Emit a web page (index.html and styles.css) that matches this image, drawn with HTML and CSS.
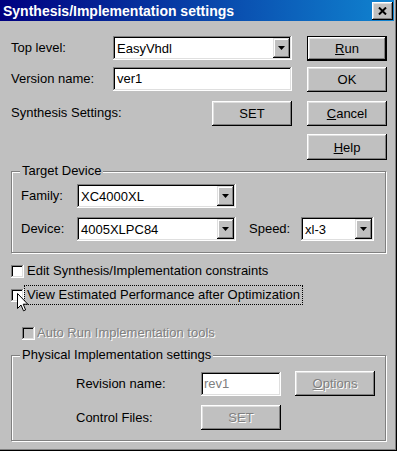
FILE: index.html
```html
<!DOCTYPE html>
<html>
<head>
<meta charset="utf-8">
<link rel="stylesheet" href="styles.css">
</head>
<body>
<div class="window">
  <div class="titlebar">
    <span class="title">Synthesis/Implementation settings</span>
    <div class="close">
      <svg width="9" height="8" viewBox="0 0 9 8"><path d="M1 0.5 L8 7.5 M8 0.5 L1 7.5" stroke="#000" stroke-width="2" fill="none"/></svg>
    </div>
  </div>
  <div class="content">
    <div class="top-grid">
      <span class="lbl">Top level:</span>
      <div class="combo w179"><span class="val">EasyVhdl</span><span class="drop"><svg width="7" height="4" viewBox="0 0 7 4"><path d="M0 0 H7 L3.5 4 Z" fill="#000"/></svg></span></div>
      <div class="btn default"><span><u>R</u>un</span></div>

      <span class="lbl">Version name:</span>
      <div class="edit w179">ver1</div>
      <div class="btn">OK</div>

      <span class="lbl">Synthesis Settings:</span>
      <div class="btn set">SET</div>
      <div class="btn"><span><u>C</u>ancel</span></div>

      <div class="btn help"><span><u>H</u>elp</span></div>
    </div>

    <div class="group target">
      <div class="group-title">Target Device</div>
      <div class="row first">
        <span class="lbl fam">Family:</span>
        <div class="combo w159"><span class="val">XC4000XL</span><span class="drop"><svg width="7" height="4" viewBox="0 0 7 4"><path d="M0 0 H7 L3.5 4 Z" fill="#000"/></svg></span></div>
      </div>
      <div class="row second">
        <span class="lbl fam">Device:</span>
        <div class="combo w159"><span class="val">4005XLPC84</span><span class="drop"><svg width="7" height="4" viewBox="0 0 7 4"><path d="M0 0 H7 L3.5 4 Z" fill="#000"/></svg></span></div>
        <span class="lbl speed">Speed:</span>
        <div class="combo w73"><span class="val">xl-3</span><span class="drop"><svg width="7" height="4" viewBox="0 0 7 4"><path d="M0 0 H7 L3.5 4 Z" fill="#000"/></svg></span></div>
      </div>
    </div>

    <div class="check-row c1">
      <span class="box"></span><span class="clabel">Edit Synthesis/Implementation constraints</span>
    </div>
    <div class="check-row c2">
      <span class="box"></span><span class="clabel focus">View Estimated Performance after Optimization</span>
    </div>
    <div class="check-row c3 disabled">
      <span class="box"></span><span class="clabel">Auto Run Implementation tools</span>
    </div>

    <div class="group physical">
      <div class="group-title">Physical Implementation settings</div>
      <div class="row prow1">
        <span class="lbl plbl">Revision name:</span>
        <div class="edit w80 dis">rev1</div>
        <div class="btn disabled opt"><span><u>O</u>ptions</span></div>
      </div>
      <div class="row prow2">
        <span class="lbl plbl">Control Files:</span>
        <div class="btn disabled">SET</div>
      </div>
    </div>
  </div>
  <svg class="cursor" width="12" height="19" viewBox="0 0 12 19"><path d="M0.5 0.5 L0.5 15.5 L4 12 L6.5 17.8 L8.6 16.9 L6.2 11.2 L10.8 11.2 Z" fill="#fff" stroke="#000" stroke-width="1"/></svg>
</div>
</body>
</html>
```

FILE: styles.css
```css
body {
  margin: 0;
  background: #c0c0c0;
  font-family: "Liberation Sans", Arial, sans-serif;
  font-size: 13px;
  color: #000;
}

.window {
  position: relative;
  width: 397px;
  height: 451px;
  box-sizing: border-box;
  background: #c0c0c0;
  border-right: 1px solid #000;
  border-bottom: 1px solid #000;
  box-shadow: inset -1px -1px #808080;
  overflow: hidden;
}

.titlebar {
  height: 21px;
  margin-right: 2px;
  padding: 0 1px 0 3px;
  display: flex;
  align-items: center;
  justify-content: space-between;
  background: linear-gradient(to right, #000080, #1084d0);
  color: #fff;
  font-weight: bold;
  font-size: 14px;
}

.close {
  width: 21px;
  height: 18px;
  box-sizing: border-box;
  background: #c0c0c0;
  display: flex;
  align-items: center;
  justify-content: center;
  box-shadow: inset -1px -1px #000, inset 1px 1px #fff, inset -2px -2px #808080, inset 2px 2px #dfdfdf;
}

.content {
  padding: 15px 0 0 11px;
}

.top-grid {
  display: grid;
  grid-template-columns: 102px 179px 95px;
  grid-template-rows: 31px 34px 33px 26px;
  align-items: start;
}

.lbl {
  line-height: 24px;
  white-space: nowrap;
}

.btn {
  width: 80px;
  height: 25px;
  box-sizing: border-box;
  display: flex;
  align-items: center;
  justify-content: center;
  background: #c0c0c0;
  box-shadow: inset -1px -1px #000, inset 1px 1px #fff, inset -2px -2px #808080, inset 2px 2px #dfdfdf;
}

.top-grid .btn {
  justify-self: end;
}

.btn.default {
  border: 1px solid #000;
}

.btn.help {
  grid-column: 3;
  height: 26px;
}

.btn.disabled {
  color: #808080;
  text-shadow: 1px 1px 0 #fff;
}

.combo, .edit {
  height: 24px;
  box-sizing: border-box;
  background: #fff;
  box-shadow: inset -1px -1px #fff, inset 1px 1px #808080, inset -2px -2px #dfdfdf, inset 2px 2px #000;
}

.combo {
  display: flex;
  align-items: center;
  padding: 2px;
}

.combo .val {
  flex: 1;
  padding-left: 2px;
  white-space: nowrap;
}

.combo .drop {
  width: 17px;
  height: 20px;
  box-sizing: border-box;
  display: flex;
  align-items: center;
  justify-content: center;
  background: #c0c0c0;
  box-shadow: inset -1px -1px #000, inset 1px 1px #dfdfdf, inset -2px -2px #808080, inset 2px 2px #fff;
}

.edit {
  padding-left: 4px;
  line-height: 24px;
}

.edit.dis {
  color: #808080;
  padding-left: 3px;
}

.w179 { width: 179px; }
.w159 { width: 159px; }
.w73 { width: 73px; }
.w80 { width: 80px; }

.group {
  width: 375px;
  box-sizing: border-box;
  border: 1px solid #808080;
  box-shadow: inset 1px 1px #fff, 1px 1px #fff;
}

.group-title {
  margin: -9px 0 0 8px;
  padding: 0 2px;
  width: fit-content;
  line-height: 16px;
  background: #c0c0c0;
  white-space: nowrap;
}

.row {
  display: flex;
  align-items: center;
  height: 24px;
}

.target {
  margin-top: 11px;
  padding-bottom: 11px;
}

.target .row { padding-left: 9px; }
.target .first { margin-top: 5px; }
.target .second { margin-top: 9px; }

.fam { width: 56px; }

.speed {
  width: 52px;
  margin-left: 13px;
}

.check-row {
  display: flex;
  align-items: center;
  height: 20px;
}

.c1 { margin-top: 8px; }
.c2 { margin-top: 4px; }
.c3 { margin-top: 18px; padding-left: 11px; }

.box {
  width: 13px;
  height: 13px;
  box-sizing: border-box;
  background: #fff;
  box-shadow: inset -1px -1px #fff, inset 1px 1px #808080, inset -2px -2px #dfdfdf, inset 2px 2px #000;
}

.clabel {
  border: 1px dotted transparent;
  padding: 0 2px;
  line-height: 18px;
  white-space: nowrap;
}

.clabel.focus {
  border-color: #000;
}

.disabled .box {
  background: #c0c0c0;
}

.check-row.disabled .clabel {
  color: #808080;
  text-shadow: 1px 1px 0 #fff;
  padding-left: 1px;
}

.physical {
  margin-top: 12px;
  padding-bottom: 10px;
}

.physical .row {
  height: 25px;
  padding-left: 64px;
}

.prow1 { margin-top: 8px; }
.prow2 { margin-top: 9px; }

.plbl { width: 125px; }

.opt { margin-left: 14px; }

.cursor {
  position: absolute;
  left: 17px;
  top: 293px;
}
```
